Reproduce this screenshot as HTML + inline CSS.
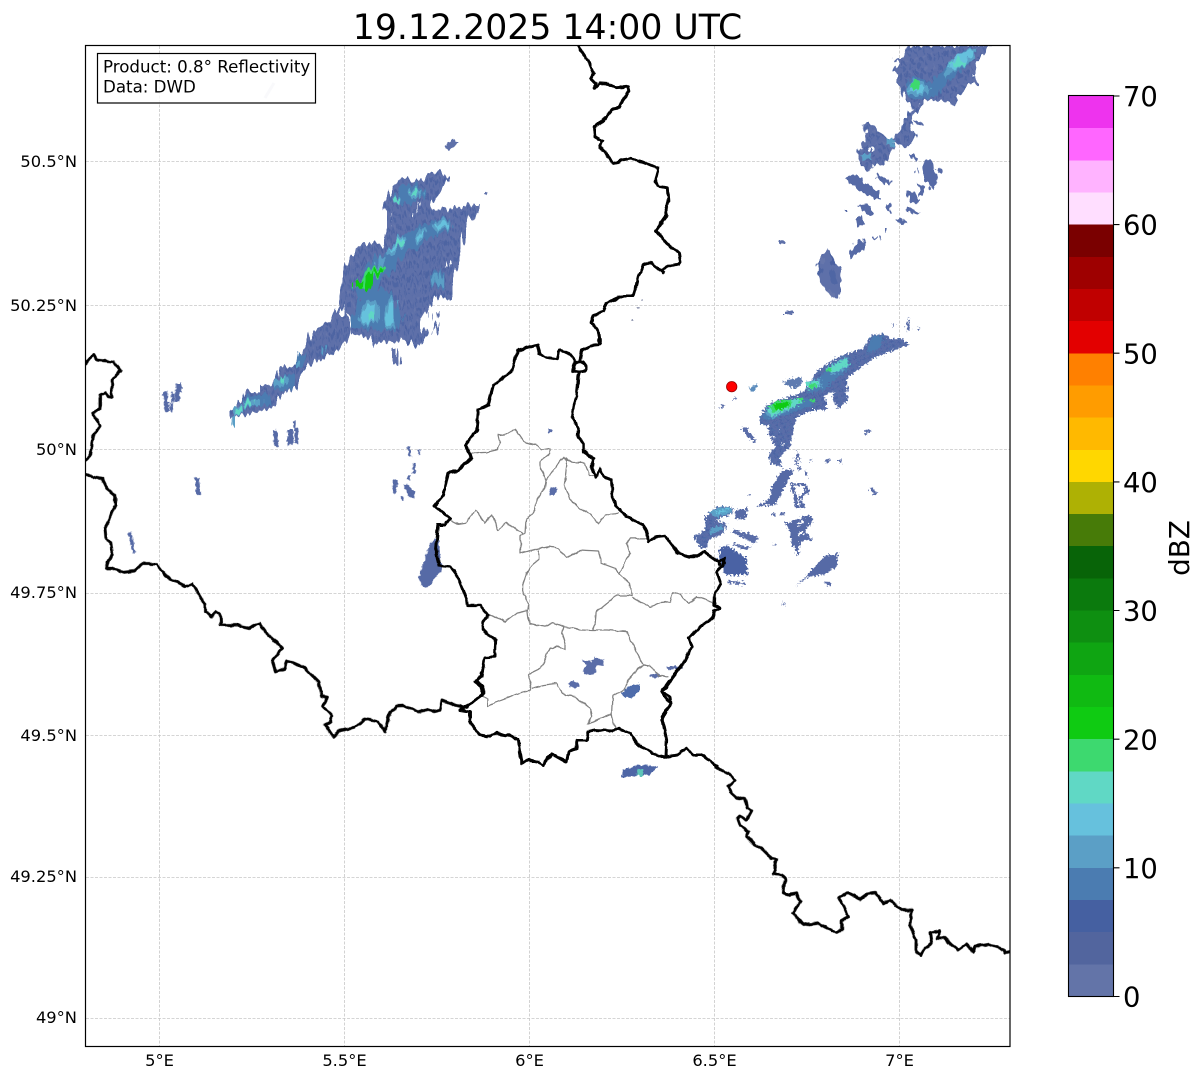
<!DOCTYPE html>
<html><head><meta charset="utf-8"><title>19.12.2025 14:00 UTC</title>
<style>
html,body{margin:0;padding:0;background:#fff}
svg{display:block}
text{font-family:"DejaVu Sans","Liberation Sans",sans-serif;fill:#000}
</style></head><body>
<svg width="1202" height="1081" viewBox="0 0 1202 1081" xmlns="http://www.w3.org/2000/svg">
<defs>
<clipPath id="ax"><rect x="85.5" y="45.5" width="924.5" height="1001"/></clipPath>
<pattern id="s" patternUnits="userSpaceOnUse" width="25" height="37" patternTransform="rotate(-14)">
<rect width="25" height="37" fill="#5e70a9"/>
<rect x="0" y="4" width="7" height="17" fill="#4d64a2"/>
<rect x="13" y="18" width="6" height="15" fill="#4f66a4"/>
<rect x="8" y="0" width="4" height="10" fill="#6676ab"/>
<rect x="19" y="2" width="4" height="12" fill="#4a60a0"/>
</pattern>
<pattern id="d" patternUnits="userSpaceOnUse" width="20" height="14" patternTransform="rotate(-25)">
<rect width="20" height="14" fill="#5a6da8"/>
<rect x="2" y="2" width="12" height="5" fill="#4a63a3"/>
<rect x="8" y="9" width="10" height="3" fill="#4b6ea9"/>
</pattern>
<filter id="j" filterUnits="userSpaceOnUse" x="85" y="45" width="925" height="1001" color-interpolation-filters="sRGB">
<feTurbulence type="fractalNoise" baseFrequency="0.3" numOctaves="2" seed="4" result="n"/>
<feDisplacementMap in="SourceGraphic" in2="n" scale="4" xChannelSelector="R" yChannelSelector="G"/>
</filter>
<filter id="j1" filterUnits="userSpaceOnUse" x="85" y="45" width="925" height="1001" color-interpolation-filters="sRGB">
<feTurbulence type="fractalNoise" baseFrequency="0.3 0.03" numOctaves="1" seed="7" result="n"/>
<feDisplacementMap in="SourceGraphic" in2="n" scale="16" xChannelSelector="R" yChannelSelector="G"/>
</filter>
<filter id="j2" filterUnits="userSpaceOnUse" x="85" y="45" width="925" height="1001" color-interpolation-filters="sRGB">
<feTurbulence type="fractalNoise" baseFrequency="0.3 0.15" numOctaves="1" seed="11" result="n"/>
<feDisplacementMap in="SourceGraphic" in2="n" scale="9" xChannelSelector="R" yChannelSelector="G"/>
</filter>
<filter id="j3" filterUnits="userSpaceOnUse" x="85" y="45" width="925" height="1001" color-interpolation-filters="sRGB">
<feTurbulence type="fractalNoise" baseFrequency="0.5" numOctaves="1" seed="3" result="n"/>
<feDisplacementMap in="SourceGraphic" in2="n" scale="8" xChannelSelector="R" yChannelSelector="G"/>
</filter>
<filter id="b" filterUnits="userSpaceOnUse" x="85" y="45" width="925" height="1001" color-interpolation-filters="sRGB">
<feTurbulence type="fractalNoise" baseFrequency="0.12" numOctaves="2" seed="9" result="n"/>
<feDisplacementMap in="SourceGraphic" in2="n" scale="3.5" xChannelSelector="R" yChannelSelector="G"/>
</filter>
</defs>
<rect width="1202" height="1081" fill="#fff"/>

<text x="547.5" y="39" font-size="34.7" text-anchor="middle">19.12.2025 14:00 UTC</text>

<!-- grid -->
<g stroke="#c8c8c8" stroke-width=".8" stroke-dasharray="3 1.5" fill="none">
<path d="M159.5 46V1046M344.5 46V1046M529.5 46V1046M714.5 46V1046M899.5 46V1046"/>
<path d="M86 161.5H1010M86 305.5H1010M86 449.5H1010M86 593.5H1010M86 735.5H1010M86 877.5H1010M86 1018.5H1010"/>
</g>

<g clip-path="url(#ax)">
<!-- NW cell (zoom 3 coordinates) -->
<g filter="url(#j1)">
<g transform="translate(220 130) scale(.33333)">
<path fill="url(#s)" d="M490 240L500 205L520 165L550 145L590 150L630 135L660 118L685 140L670 170L650 200L635 225L650 240L680 230L720 232L750 225L780 225L760 265L745 280L730 330L715 390L710 430L690 510L650 500L640 510L605 570L600 590L625 610L600 650L550 630L490 640L460 645L455 625L400 615L395 600L400 560L360 550L355 520L365 450L385 385L415 350L450 340L485 345L505 290L510 250Z"/>
<path fill="url(#s)" d="M345 540L375 530L395 590L390 620L355 655L320 680L300 690L260 710L235 770L190 790L160 830L95 855L55 860L30 862L30 840L50 835L75 785L120 785L125 760L170 755L175 712L225 710L240 650L260 625L300 590L330 565Z"/>
<path fill="#fff" d="M602 218L590 262L582 255ZM680 390L690 410L672 412ZM368 530L375 565L358 560ZM650 510L660 520L640 535Z"/>
<path fill="#5e70a9" d="M522 652L535 655L538 703L522 703ZM625 548h6v18h-6zM655 540h5v16h-5zM640 590l15-18 3 6-12 28h-8z"/>
<g fill="#4b7cb1">
<path d="M400 480L440 400L490 370L540 320L610 285L690 255L700 290L620 330L550 380L520 420L470 470L520 500L550 560L530 600L470 600L400 590L395 560L420 510Z"/>
<path d="M520 210L540 170L600 155L615 195L585 215L545 225Z"/>
<path d="M635 430L665 420L668 475L640 470Z"/>
<path d="M230 670L250 665L250 710L225 710Z"/>
<path d="M300 650L320 650L315 675L295 675Z"/>
<path d="M65 805L150 785L155 825L75 835Z"/>
<path d="M160 765L200 735L230 740L225 775L165 785Z"/>
</g>
<g fill="#5b9fc6">
<path d="M640 290L665 265L692 262L685 290L650 305Z"/>
<path d="M580 325L605 292L622 300L610 325L590 335Z"/>
<path d="M495 365L540 318L562 330L545 352L505 375Z"/>
<path d="M470 410L480 378L492 382L490 415Z"/>
<path d="M415 560L440 510L475 515L470 575L430 585Z"/>
<path d="M490 560L505 505L528 510L530 590L495 595Z"/>
<path d="M640 440L662 425L665 465L645 470Z"/>
<path d="M560 185L590 165L608 180L600 205L575 205Z"/>
<path d="M515 205L535 195L548 210L535 225Z"/>
<path d="M230 695L240 690L240 712L228 712Z"/>
<path d="M300 655L318 652L315 672L298 672Z"/>
<path d="M160 762L200 738L205 760L165 778Z"/>
<path d="M70 810L125 808L125 828L70 832Z"/>
<path d="M40 835L65 830L68 855L42 860ZM35 860h12v26h-12z"/>
</g>
<g fill="#66c1dd">
<path d="M650 285L680 270L685 282L655 298Z"/>
<path d="M590 320L608 300L615 305L600 325Z"/>
<path d="M505 360L540 325L552 335L535 350Z"/>
<path d="M425 560L445 520L465 525L460 570L435 578Z"/>
<path d="M498 565L510 515L522 520L522 580L500 585Z"/>
</g>
<g fill="#60d8c5">
<path d="M568 190L590 170L604 182L590 198Z"/>
<path d="M520 207L535 200L543 212L530 220Z"/>
<path d="M528 342L545 328L550 343L532 352Z"/>
<path d="M72 815L95 812L95 826L72 828Z"/>
<path d="M47 840L63 837L63 853L47 856Z"/>
<path d="M182 742L198 740L198 756L182 758Z"/>
<path d="M445 548L462 540L460 565L445 567Z"/>
</g>
<g fill="#3dd96f">
<path d="M450 412L500 415L495 432L470 438L432 478L402 478L418 447Z"/>
</g>
<g fill="#0fcb12">
<path d="M443 430L460 425L455 480L435 482Z"/>
<path d="M405 460L420 455L418 478L405 478Z"/>
<path d="M465 418L495 422L490 435L465 432Z"/>
</g>
</g>
</g>
<!-- NE cell (zoom 6 coordinates) -->
<g filter="url(#j2)">
<g transform="translate(830 40) scale(.33333)">
<path fill="url(#s)" d="M235 18L480 18L440 70L430 105L445 135L420 130L385 175L370 195L340 185L290 180L265 205L240 245L260 290L230 325L185 300L210 270L225 240L245 205L225 180L215 150L200 125L205 100L190 95L205 70L190 58L215 55Z"/>
<path fill="url(#s)" d="M95 250L120 245L140 270L175 295L195 310L175 360L160 375L130 375L115 395L90 370L80 340L100 310L110 280Z"/>
<path fill="#fff" d="M120 320h16v14h-16z"/>
<g fill="#566aa6">
<path d="M45 410L75 400L150 460L150 478L115 470L60 430Z"/>
<path d="M140 400L185 425L180 435L135 415Z"/>
<path d="M85 495L115 490L135 525L115 530Z"/>
<path d="M75 535L95 530L102 555L85 558Z"/>
<path d="M55 640L90 595L115 605L85 640L65 652Z"/>
<path d="M195 540L210 533L235 550L225 558Z"/>
<path d="M220 508L235 503L270 518L262 525Z"/>
<path d="M225 450L240 448L270 480L255 495L245 490Z"/>
<path d="M265 425L285 440L280 470L268 470Z"/>
<path d="M275 365L295 355L315 375L322 430L305 445L285 425Z"/>
<path d="M320 385L335 385L338 395L325 398Z"/>
<path d="M235 345L245 340L265 358L258 362Z"/>
<path d="M165 495L182 488L182 515L175 518Z"/>
<path d="M40 510h10v6h-10zM165 568h10v8h-10zM128 590h20v6h-20zM260 388l8 8-4 4-6-8z"/>
<path d="M250 240L280 252L278 258L248 246Z"/>
</g>
<path fill="#4b7cb1" d="M228 130L255 105L300 130L340 90L400 30L440 30L420 70L370 110L320 165L290 175L245 175Z"/>
<path fill="#5b9fc6" d="M340 110L365 60L415 25L440 30L430 60L385 90ZM228 145L250 115L285 130L305 150L275 165L240 165Z"/>
<path fill="#66c1dd" d="M355 85L375 50L420 28L432 35L400 75L375 90ZM235 150L250 125L285 140L275 160Z"/>
<path fill="#60d8c5" d="M362 70L385 55L405 70L385 85Z"/>
<path fill="#3dd96f" d="M240 130L258 115L272 130L262 152L243 148Z"/>
<path fill="#5b9fc6" d="M170 295L195 300L190 320L170 315ZM90 350L120 340L125 355L95 360Z"/>
</g>
<path fill="url(#s)" d="M828 247L836 262L842 270L840 298L832 298L822 285L816 265Z"/>
</g>
<!-- E cell (zoom 5 coordinates) -->
<g filter="url(#j3)">
<g transform="translate(690 310) scale(.33333)">
<path fill="url(#d)" d="M208 325L230 285L270 268L320 255L345 240L385 180L430 150L470 130L520 115L545 75L580 70L600 85L640 88L655 105L600 125L550 145L510 175L470 205L475 270L445 295L425 265L435 245L405 255L410 300L370 300L320 320L310 360L300 410L270 440L275 470L240 460L235 435L255 410L235 370L235 345L215 345Z"/>
<path fill="#fff" d="M250 380h8v6h-8zM275 400h7v6h-7zM265 355h6v7h-6zM470 240l6 14-8 2z"/>
<path fill="#566aa6" d="M280 480L310 480L275 550L255 585L200 590L240 565L245 530L270 490Z"/>
<path fill="none" stroke="#566aa6" stroke-width="9" d="M305 525L340 522L355 542L328 565L340 590L322 592L316 560Z"/>
<path fill="#5e7bb0" d="M275 215L335 200L335 225L310 235L285 222Z"/>
<path fill="#5b8cbd" d="M178 232L205 218L195 245L182 245Z"/>
<g fill="#5a6da8">
<path d="M88 290L103 283L100 295L90 296ZM128 268l10-8 3 4-10 6ZM152 358L165 350L200 392L192 398ZM282 6h22v6h-22zM525 362l18-3 2 6-14 2v10h-7zM538 535L550 535L562 550L552 553ZM405 450l12-4 2 10-12 4ZM445 458l8-12 3 2-4 14zM650 50l6-30 5 40-10 2zM605 40h7v8h-7zM684 52h5v8h-5zM405 815L426 818L415 830ZM245 610h12v8h-12zM270 608h14v8h-14zM250 702h10v6h-10zM170 552h10v4h-10zM275 880h12v5h-12zM320 420l12 30-10 5ZM345 480l10 20-10-2ZM360 448h8v5h-8zM310 440l25 40-10 2Z"/>
<path fill="#566aa6" d="M285 640L360 615L370 630L345 660L365 690L330 695L325 740L305 700L300 660Z"/>
<path fill="#fff" d="M320 640l20-10 3 8-18 10zM325 665l15 0 0 8-15 2z"/>
<path fill="#566aa6" d="M315 830L350 795L385 760L410 735L445 730L440 770L400 795L355 800Z"/>
<path d="M125 660L175 670L210 685L190 700L130 668ZM130 700L185 712L170 720L125 706ZM115 810L165 818L165 825L112 818Z"/>
</g>
<path fill="url(#d)" d="M45 620L80 590L125 590L130 610L75 630L110 640L100 670L55 690L50 715L35 715L10 680L45 660Z"/>
<path fill="#5b9fc6" d="M60 605L85 592L125 592L125 608L72 622ZM60 655L100 645L98 660L60 672Z"/>
<path fill="#66c1dd" d="M72 608L100 598L118 600L90 612Z"/>
<path fill="#566aa6" d="M135 600L175 595L165 630L135 625Z"/>
<path fill="#4a62a4" d="M90 712L115 708L170 745L172 795L105 795L85 745Z"/>
<path fill="#4b7cb1" d="M385 205L430 160L475 135L480 175L440 205L400 240L350 250ZM545 80L580 75L570 115L530 130ZM215 325L235 285L290 270L360 265L370 285L300 310L240 330Z"/>
<path fill="#5b9fc6" d="M350 215L390 205L395 230L355 240ZM405 175L470 140L478 170L430 195ZM225 310L240 285L310 270L340 275L300 300L245 325Z"/>
<path fill="#60d8c5" d="M348 220L385 208L388 228L355 238ZM408 178L465 145L478 165L430 190ZM232 300L240 285L300 270L330 265L335 280L290 300L245 320Z"/>
<path fill="#3dd96f" d="M238 290L260 272L305 270L300 290L250 308ZM355 222L378 220L375 232L360 234ZM410 178L422 174L422 186L412 186ZM325 265L340 262L340 275L325 275ZM360 265L375 270L370 280L360 275Z"/>
<path fill="#0fcb12" d="M250 285L275 275L300 280L280 298L255 298Z"/>
</g>
</g>
<!-- small echoes -->
<g filter="url(#j)">
<g transform="translate(220 130) scale(.33333)">
<path fill="#5e70a9" d="M675 50L700 25L713 40L687 62ZM795 182L805 187L800 197L793 192Z"/>
</g>
<path fill="#5e70a9" d="M779 240h6v4h-6zM785 311h8v3h-8z"/>
<g transform="translate(430 420) scale(.33333)" fill="#5a6da8">
<path d="M355 27h10v11h-10zM360 205L375 200L382 210L372 227L360 225Z"/>
<path d="M455 720L485 725L495 710L520 720L522 738L500 735L495 760L470 765L458 755L470 735Z"/>
<path d="M415 790L430 780L452 795L445 802L420 802Z"/>
<path fill="#4e6cab" d="M575 820L600 798L630 790L630 810L605 835L580 830Z"/>
<path d="M658 765L690 760L690 772L660 772ZM712 740L750 738L758 744L715 750Z"/>
</g>
<g transform="translate(80 340) scale(.33333)" fill="#566aa6">
<path d="M250 155H264V187H268V215H252ZM272 158H284V185H272ZM288 130H305V155H299V185H285V155H288ZM270 187H279V215H270Z"/>
<path d="M580 270H592L595 320H582ZM622 268H640L641 315H622ZM640 243H647V262H652L655 310H645V262H640Z"/>
<path d="M345 412H357L362 465H348Z"/>
<path d="M145 578L155 576L167 638L158 640Z"/>
<path d="M1015 715L1050 610L1075 590L1085 690L1045 740L1030 742Z"/>
<path d="M938 420H952L948 458H938ZM970 430L985 435L1005 460L1002 475L985 470ZM1000 368H1006V402H998ZM980 320H990L995 350H988ZM1015 328H1020V345H1015ZM982 406H992V420H982ZM960 470H972V484H965Z"/>
</g>
<g transform="translate(440 680) scale(.33333)">
<path fill="#4e66a6" d="M548 268L600 255L652 260L630 285L546 292Z"/>
<path fill="#5fc4b8" d="M590 268L610 266L610 288L590 288Z"/>
</g>
<g fill="#777f9e"><rect x="641" y="300" width="2" height="2"/><rect x="637" y="307" width="3" height="1.5"/><rect x="631" y="319" width="2" height="2"/></g>
</g>
<circle cx="731.7" cy="386.7" r="5.2" fill="#f00" stroke="#900" stroke-width=".8"/>

<!-- boundaries -->
<g filter="url(#b)">
<g transform="translate(430 420) scale(.33333)" fill="none" stroke="#808080" stroke-width="3.8" stroke-linejoin="round">
<path d="M120 103L150 98L170 97L200 90L210 65L205 42L225 45L255 28L280 65L320 75L335 90L360 85L360 100L330 125L330 145L345 175L348 182"/>
<path d="M348 182L370 150L400 112L412 120L403 195L420 235L445 262L480 280L505 310L525 285L565 278"/>
<path d="M407 113L430 130L465 130L480 168L495 165"/>
<path d="M348 182L345 200L320 240L315 270L288 300L285 340L270 350L270 400L320 387L360 380L385 385L410 412L450 390L505 393L515 430L555 445L568 460"/>
<path d="M60 300L85 313L105 310L138 272L165 310L185 285L205 330L230 310L280 342"/>
<path d="M325 390L325 420L300 440L290 460L278 495L278 520L295 550L292 570L297 610L345 620L370 608L400 620L445 628L485 630L530 630L590 635L625 710L640 735"/>
<path d="M292 570L260 578L225 605L200 590L175 585"/>
<path d="M568 460L600 400L590 370L600 355L650 355"/>
<path d="M568 460L600 490L605 525L560 525L500 575L497 610L485 630"/>
<path d="M605 530L660 562L690 548L720 545L730 518L750 525L775 550L800 530L855 550"/>
<path d="M400 620L395 640L405 670L405 690L380 678L360 685L345 720L330 745L295 762L305 785L300 810L265 820L230 835L190 850L172 858L172 835L157 825"/>
<path d="M305 805L340 795L380 790L405 825L435 830L480 865L485 890L475 912L545 882L547 830L580 810L610 760L640 735L660 738L685 765L715 770"/>
<path d="M545 882L557 925"/>
</g>

<g fill="none" stroke="#000" stroke-width="8.8" stroke-linejoin="round" stroke-linecap="round">
<g transform="translate(430 40) scale(.33333)">
<path d="M445 18L458 40L475 65L490 100L482 115L497 130L495 145L510 130L535 132L560 143L595 140L598 155L585 170L570 203L547 207L525 235L492 263L495 290L517 303L507 322L525 333L547 372L575 360L600 356L635 365L655 372L685 385L675 425L685 437L712 442L715 485L707 510L708 530L678 572L710 610L745 637L750 665L745 672L710 680L700 690M700 700L662 668L640 675L625 710L618 740L610 768L580 768L530 790L520 815L490 825L482 845L505 875L510 915L480 918L458 928L450 965"/>
<path d="M450 965C462 962 470 975 468 985C465 998 440 998 428 992C430 975 436 968 450 965Z"/>
<path d="M448 998L445 1010L443 1040L440 1070L430 1100L426 1130L445 1165L443 1190L460 1210L460 1235L490 1255"/>
<path d="M438 965L418 940L388 930L382 958L350 952L330 940L323 915L262 932L245 995L190 1035L175 1095L145 1110L140 1170L105 1215L125 1255"/>
</g>
<g transform="translate(430 420) scale(.33333)">
<path d="M125 115L105 130L85 153L55 158L40 225L12 258L60 295L45 315L25 315L18 390L28 437L60 440L85 475L110 540L112 557L150 557L175 585L158 610L158 630L197 660L195 710L165 712L155 768L135 785L157 803L157 825L110 860L95 865"/>
<path d="M465 95L487 115L485 145L497 170L510 145L520 170L545 180L545 225L560 260L590 290L610 300L640 315L652 340L655 365L675 350L705 347L745 400L775 410L800 410L822 395L865 425L885 415L880 435L860 455L872 490L855 520L853 555L868 565L855 575L850 590L810 620L775 655L785 680L760 730L725 775L710 800L695 815L720 850L695 900L700 925"/>
<path d="M885 430C880 415 865 420 868 435"/>
</g>
<g transform="translate(440 680) scale(.33333)">
<path d="M110 2L130 20L130 40L95 70L75 80L60 90"/>
<path d="M60 90L90 95L90 125L120 165L150 170L170 160L205 165L235 180L245 240L245 250L265 240L295 245L310 255L335 222L380 247L385 215L410 205L410 180L440 180L445 155L460 150L505 152L535 145L570 160L590 190L640 220L672 232L710 225L738 205L760 225L785 225L830 258"/>
<path d="M690 0L665 35L690 50L693 70L665 110L680 180L678 232"/>
</g>
<g transform="translate(720 760) scale(.33333)">
<path d="M-12 22L0 30L25 40L45 62L25 80L35 100L50 113L75 118L82 145L95 152L80 180L60 167L52 175L60 197L75 205L85 215L80 228L105 255L125 265L155 295L170 298L160 340L185 345L195 355L190 400L205 405L230 400L240 425L218 458L248 495L295 490L350 518L365 510L365 480L385 470L370 435L355 413L380 397L420 418L445 400L465 397L490 430L510 420L545 450L575 450L570 495L588 540L588 575L600 585L615 565L635 550L630 518L660 512L650 535L675 535L695 555L715 570L740 552L760 575L765 560L805 553L850 568L855 578L870 575"/>
</g>
<g transform="translate(80 340) scale(.33333)">
<path d="M18 70L40 42L50 60L100 65L122 92L95 120L95 172L85 170L75 158L60 165L60 205L38 220L60 258L38 290L32 345L18 358"/>
<path d="M18 405L65 415L80 445L105 465L108 495L75 565L78 598L92 605L97 640L78 685L95 685L130 697L165 693L185 672L230 672L258 708L315 738L338 733L375 795L375 815L395 828L408 815L420 825L422 855L470 855L510 865L537 850L560 880L607 925L577 962L587 995L615 985L622 962L675 985L715 1025L725 1070L742 1073L728 1100L755 1128L752 1145L735 1155L760 1190L780 1172L825 1163L855 1137L895 1143L915 1175L925 1130L950 1098L970 1097L1015 1117L1045 1108L1060 1115L1080 1110L1086 1080L1125 1095L1145 1100"/>
</g>
</g>
</g>
</g>

<!-- faint streak under legend -->
<path d="M265 98L274 83" stroke="#dfe2ec" stroke-width="3" fill="none"/>
<!-- legend box -->
<rect x="97.5" y="53.5" width="218" height="49.5" fill="#fff" fill-opacity=".8" stroke="#000" stroke-width="1.2"/>
<text x="103" y="72.5" font-size="16.67">Product: 0.8° Reflectivity</text>
<text x="103" y="92.5" font-size="16.67">Data: DWD</text>

<!-- axes frame -->
<rect x="85.5" y="45.5" width="924.5" height="1001" fill="none" stroke="#000" stroke-width="1.2"/>

<!-- tick labels -->
<g font-size="16.3" text-anchor="end">
<text x="77" y="167">50.5°N</text>
<text x="77" y="311">50.25°N</text>
<text x="77" y="455">50°N</text>
<text x="77" y="598">49.75°N</text>
<text x="77" y="741">49.5°N</text>
<text x="77" y="882">49.25°N</text>
<text x="77" y="1023">49°N</text>
</g>
<g font-size="16.3" text-anchor="middle">
<text x="159.5" y="1066">5°E</text>
<text x="344.5" y="1066">5.5°E</text>
<text x="529.5" y="1066">6°E</text>
<text x="714.5" y="1066">6.5°E</text>
<text x="899.5" y="1066">7°E</text>
</g>

<!-- colorbar -->
<g shape-rendering="crispEdges">
<rect x="1068" y="96" width="46" height="32.5" fill="#ee33ee"/>
<rect x="1068" y="128.16" width="46" height="32.5" fill="#ff66ff"/>
<rect x="1068" y="160.32" width="46" height="32.5" fill="#ffb3ff"/>
<rect x="1068" y="192.48" width="46" height="32.5" fill="#ffdeff"/>
<rect x="1068" y="224.64" width="46" height="32.5" fill="#7a0000"/>
<rect x="1068" y="256.8" width="46" height="32.5" fill="#9e0000"/>
<rect x="1068" y="288.96" width="46" height="32.5" fill="#c00000"/>
<rect x="1068" y="321.12" width="46" height="32.5" fill="#e30000"/>
<rect x="1068" y="353.28" width="46" height="32.5" fill="#ff8000"/>
<rect x="1068" y="385.44" width="46" height="32.5" fill="#ff9c00"/>
<rect x="1068" y="417.6" width="46" height="32.5" fill="#ffb900"/>
<rect x="1068" y="449.76" width="46" height="32.5" fill="#ffd700"/>
<rect x="1068" y="481.92" width="46" height="32.5" fill="#aeb104"/>
<rect x="1068" y="514.08" width="46" height="32.5" fill="#477b08"/>
<rect x="1068" y="546.24" width="46" height="32.5" fill="#086408"/>
<rect x="1068" y="578.4" width="46" height="32.5" fill="#0b7a0d"/>
<rect x="1068" y="610.56" width="46" height="32.5" fill="#0e8f11"/>
<rect x="1068" y="642.72" width="46" height="32.5" fill="#0fa512"/>
<rect x="1068" y="674.88" width="46" height="32.5" fill="#10ba12"/>
<rect x="1068" y="707.04" width="46" height="32.5" fill="#0fcb12"/>
<rect x="1068" y="739.2" width="46" height="32.5" fill="#3dd96f"/>
<rect x="1068" y="771.36" width="46" height="32.5" fill="#60d8c5"/>
<rect x="1068" y="803.52" width="46" height="32.5" fill="#66c1dd"/>
<rect x="1068" y="835.68" width="46" height="32.5" fill="#5b9fc6"/>
<rect x="1068" y="867.84" width="46" height="32.5" fill="#4b7cb1"/>
<rect x="1068" y="900" width="46" height="32.5" fill="#4560a1"/>
<rect x="1068" y="932.16" width="46" height="32.5" fill="#52659e"/>
<rect x="1068" y="964.32" width="46" height="32.2" fill="#6374a8"/>
</g>
<rect x="1068.5" y="95.5" width="45" height="901" fill="none" stroke="#000" stroke-width="1.1"/>
<g stroke="#000" stroke-width="1.1">
<path d="M1113.5 96H1119.5M1113.5 224.6H1119.5M1113.5 353.2H1119.5M1113.5 481.9H1119.5M1113.5 610.5H1119.5M1113.5 739.2H1119.5M1113.5 867.8H1119.5M1113.5 996.5H1119.5"/>
</g>
<g font-size="27.4">
<text x="1123" y="106">70</text>
<text x="1123" y="234.5">60</text>
<text x="1123" y="363.5">50</text>
<text x="1123" y="492">40</text>
<text x="1123" y="620.5">30</text>
<text x="1123" y="749.5">20</text>
<text x="1123" y="878">10</text>
<text x="1123" y="1006.5">0</text>
</g>
<text transform="translate(1189 548) rotate(-90)" font-size="27.78" text-anchor="middle">dBZ</text>
</svg>
</body></html>
